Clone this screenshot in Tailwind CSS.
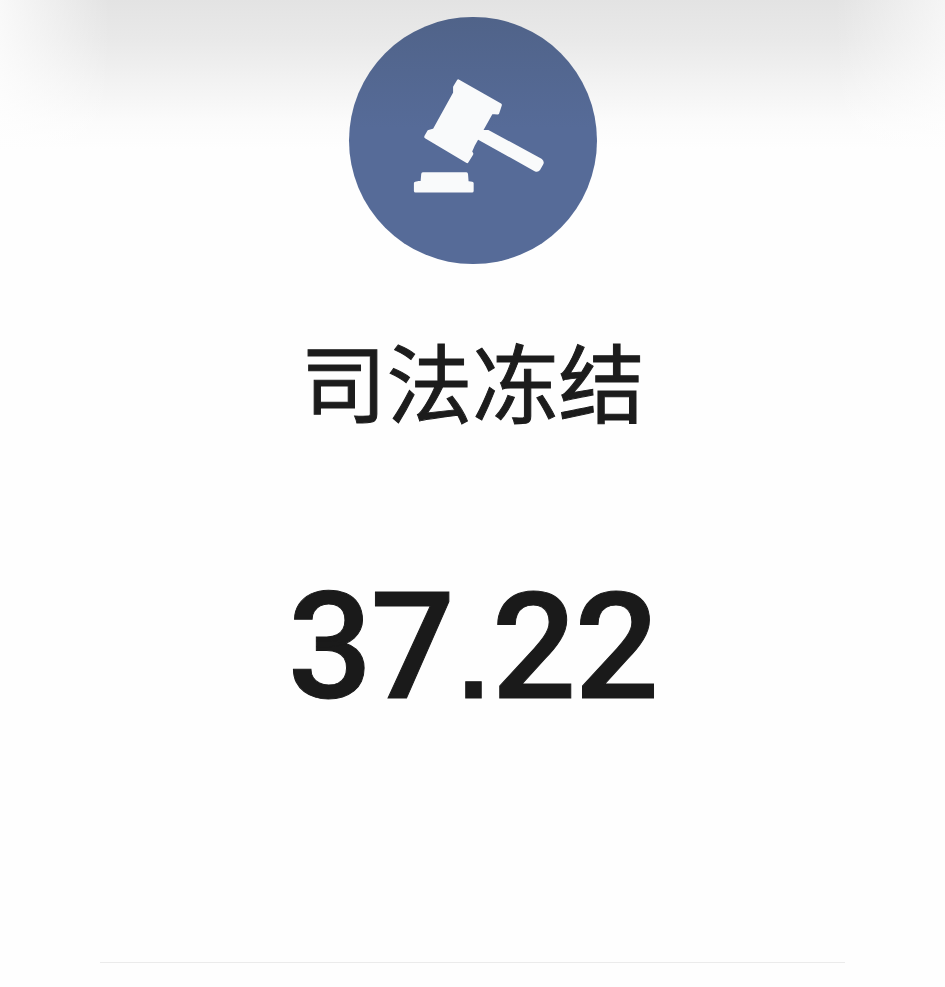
<!DOCTYPE html>
<html lang="zh-CN">
<head>
  <meta charset="UTF-8" />
  <meta name="viewport" content="width=device-width, initial-scale=1.0" />
  <title>司法冻结</title>
  <script src="https://cdn.jsdelivr.net/npm/@tailwindcss/browser@4"></script>
</head>
<body class="bg-[#fefefe]">
  <div class="w-[945px] h-[987px] overflow-hidden flex flex-col items-center pt-[17px] bg-no-repeat bg-[linear-gradient(to_right,#fefefecc,#fefefe00_110px,#fefefe00_835px,#fefefeaa),linear-gradient(to_bottom,#e3e3e3,#e9e9e9_40px,#f3f3f3_85px,#fbfbfb_122px,#fefefe_150px)] bg-size-[100%_150px,100%_150px]">
    <!-- Gavel badge -->
    <div class="w-[248px] h-[247px] shrink-0 rounded-full bg-[linear-gradient(to_bottom,#506389,#566b98_45%)]">
      <svg class="w-full h-full" viewBox="24 21 744 744" fill="#f9fafb" stroke="#f9fafb" stroke-width="10" stroke-linejoin="round">
        <path d="M352 214 L478 286 L470 310 L452 308 L396 408 L388 426 L392 433 L378 456 L254 382 L263 366 L279 362 L341 250 L341 232 Z" />
        <path d="M425 366 L440 366 L600 452 Q606 458 603 463 L594 479 Q590 484 584 481 L410 384 Z" />
        <path d="M245 494 L376 494 L378 520 L393 522 L393 545 L223 545 L223 522 L243 518 Z" />
      </svg>
    </div>

    <h1 class="mt-[61px] text-[86px] leading-[110px] font-normal text-[#1c1c1c] [-webkit-text-stroke:1px_#1c1c1c] font-['Noto_Sans_CJK_SC',sans-serif]">司法冻结</h1>

    <div class="mt-[122px] text-[149px] leading-[180px] font-medium tracking-[-2px] text-[#1a1a1a] [-webkit-text-stroke:1px_#1a1a1a] font-['Roboto',sans-serif]">37<span class="mx-[5px] text-[110px] font-bold font-['Liberation_Sans',sans-serif]">.</span>22</div>

    <!-- Divider -->
    <div class="mt-[212px] w-[745px] h-px shrink-0 bg-[#ebebeb]"></div>
  </div>
</body>
</html>
